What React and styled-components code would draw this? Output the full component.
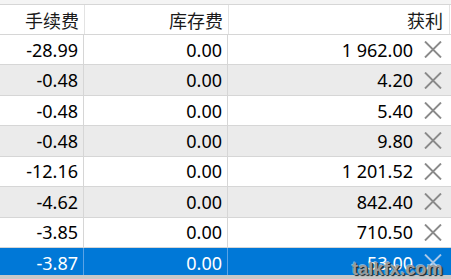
import styled, { createGlobalStyle } from 'styled-components';

const rows = [
    { fee: '-28.99', storage: '0.00', profit: '1 962.00' },
    { fee: '-0.48', storage: '0.00', profit: '4.20' },
    { fee: '-0.48', storage: '0.00', profit: '5.40' },
    { fee: '-0.48', storage: '0.00', profit: '9.80' },
    { fee: '-12.16', storage: '0.00', profit: '1 201.52' },
    { fee: '-4.62', storage: '0.00', profit: '842.40' },
    { fee: '-3.85', storage: '0.00', profit: '710.50' },
    { fee: '-3.87', storage: '0.00', profit: '53.00', selected: true },
];

function CloseIcon({ $selected }) {
    return (
        <CloseBox $selected={$selected}>
            <svg width="18" height="17" viewBox="0 0 18 17">
                <path d="M1 0.5 L17 16.5 M17 0.5 L1 16.5" stroke="currentColor" strokeWidth="1.9" fill="none" />
            </svg>
        </CloseBox>
    );
}

function App() {
    return (
        <Page>
            <GlobalStyle />
            <Viewport>
                <Header>
                    <HeadCell>手续费</HeadCell>
                    <HeadCell>库存费</HeadCell>
                    <HeadCell $last>获利</HeadCell>
                </Header>
                {rows.map((r, i) => (
                    <Row key={i} $alt={i % 2 === 1} $selected={r.selected}>
                        <Cell $selected={r.selected}>{r.fee}</Cell>
                        <Cell $selected={r.selected}>{r.storage}</Cell>
                        <ProfitCell>
                            <span>{r.profit}</span>
                            <CloseIcon $selected={r.selected} />
                        </ProfitCell>
                    </Row>
                ))}
            </Viewport>
            <BottomBar />
            <Watermark>talkfx.com</Watermark>
        </Page>
    );
}

const GlobalStyle = createGlobalStyle`
    body {
        margin: 0;
        background: #ffffff;
        font-family: "Noto Sans", "Noto Sans CJK SC", sans-serif;
    }
`;

const Page = styled.div`
    position: relative;
    width: 451px;
    height: 279px;
    overflow: hidden;
    background: #f4f4f4;
    padding-top: 4px;
    box-sizing: border-box;
    display: flex;
    flex-direction: column;
`;

const Viewport = styled.div`
    height: 271px;
    overflow: hidden;
    background: #ffffff;
`;

const Header = styled.div`
    display: grid;
    grid-template-columns: 85px 144px 221px;
    height: 31px;
    box-sizing: border-box;
    border-top: 1px solid #d6d6d6;
    border-bottom: 1px solid #d6d6d6;
    background: #ffffff;
`;

const HeadCell = styled.div`
    display: flex;
    align-items: center;
    justify-content: flex-end;
    padding-right: ${({ $last }) => ($last ? '6px' : '5px')};
    border-right: 1px solid #e3e3e3;
    font-size: 18px;
    color: #1a1a1a;
`;

const Row = styled.div`
    display: grid;
    grid-template-columns: 84px 144px 1fr;
    height: 30.43px;
    box-sizing: border-box;
    border-bottom: 1px solid #d6d6d6;
    background: ${({ $selected, $alt }) => ($selected ? '#0078d7' : $alt ? '#ebebeb' : '#ffffff')};
    color: ${({ $selected }) => ($selected ? '#ffffff' : '#000000')};
    font-size: 18px;
`;

const Cell = styled.div`
    display: flex;
    align-items: center;
    justify-content: flex-end;
    padding-right: 5px;
    border-right: 1px solid ${({ $selected }) => ($selected ? '#5aa3e6' : '#d6d6d6')};
`;

const ProfitCell = styled.div`
    display: flex;
    align-items: center;
    justify-content: flex-end;
    padding-right: 9px;
    gap: 11px;
`;

const CloseBox = styled.span`
    display: flex;
    color: ${({ $selected }) => ($selected ? '#a9c8e8' : '#8a8a8a')};
`;

const BottomBar = styled.div`
    flex: 1;
    background: #c8c8c8;
`;

const Watermark = styled.div`
    position: absolute;
    right: 8px;
    bottom: 1px;
    font-family: "Liberation Sans", Arial, sans-serif;
    font-weight: 700;
    font-size: 18px;
    line-height: 18px;
    letter-spacing: 0.2px;
    color: #9c9c9c;
    text-shadow: 1px 1px 1px #1e1e1e, -1px -1px 0 rgba(255, 255, 255, 0.45);
`;

export default App;
